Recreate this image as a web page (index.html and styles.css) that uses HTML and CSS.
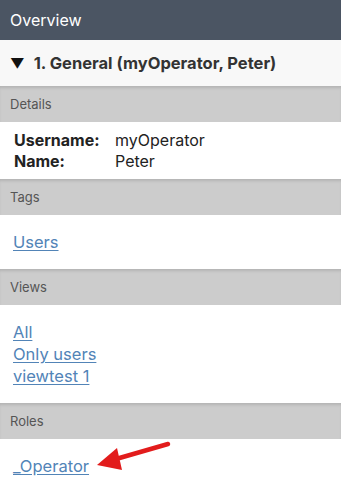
FILE: index.html
```html
<!DOCTYPE html>
<html lang="en">
<head>
  <meta charset="UTF-8">
  <meta name="viewport" content="width=device-width, initial-scale=1.0">
  <title>Overview</title>
  <link rel="stylesheet" href="styles.css">
</head>
<body>
  <div class="header">Overview</div>
  <div class="group-title">
    <span class="caret">&#9660;</span>
    <span>1. General (myOperator, Peter)</span>
  </div>

  <div class="section-bar">Details</div>
  <div class="details">
    <div class="detail-row"><span class="detail-key">Username:</span><span>myOperator</span></div>
    <div class="detail-row"><span class="detail-key">Name:</span><span>Peter</span></div>
  </div>

  <div class="section-bar">Tags</div>
  <div class="links">
    <a href="#">Users</a>
  </div>

  <div class="section-bar">Views</div>
  <div class="links">
    <a href="#">All</a>
    <a href="#">Only users</a>
    <a href="#">viewtest 1</a>
  </div>

  <div class="section-bar">Roles</div>
  <div class="links roles">
    <a href="#">_Operator</a>
    <svg class="arrow" width="90" height="40" viewBox="0 0 90 40">
      <line x1="78" y1="5" x2="26" y2="20" stroke="#e21c1c" stroke-width="4.5" stroke-linecap="round"/>
      <polygon points="7,26 27,9 32,31" fill="#e21c1c"/>
    </svg>
  </div>
</body>
</html>
```

FILE: styles.css
```css
* {
  --header-bg: #4b5563;
  --title-bg: #f8f8f8;
  --bar-bg: #cccccc;
  --bar-text: #555555;
  --text-color: #222222;
  --link-color: #5284b7;
}
body {
    margin: 0;
    background-color: #ffffff;
    font-family: Inter, "Noto Sans", sans-serif;
    color: var(--text-color);
}

.header {
    height: 40px;
    padding: 0 10px;
    display: flex;
    align-items: center;

    background-color: var(--header-bg);
    color: #ffffff;
    font-size: 16px;
}

.group-title {
    height: 46px;
    padding: 0 10px;
    display: flex;
    align-items: center;
    gap: 9px;

    background-color: var(--title-bg);
    color: #333333;
    font-size: 16.5px;
    font-weight: 700;
}
.caret {
    font-size: 14px;
    color: #111111;
}

.section-bar {
    height: 36px;
    padding: 0 10px;
    display: flex;
    align-items: center;

    background-color: var(--bar-bg);
    box-shadow: inset 0 3px 3px -1px rgba(0, 0, 0, 0.12);
    color: var(--bar-text);
    font-size: 13px;
}

.details {
    padding: 8px 14px 7px;
    font-size: 16px;
    line-height: 21px;
}
.detail-row {
    display: flex;
}
.detail-key {
    width: 101px;
    font-weight: 700;
}

.links {
    padding: 16px 13px;
    display: flex;
    flex-direction: column;
    align-items: flex-start;
    font-size: 16.5px;
    line-height: 22px;
}
.links a {
    color: var(--link-color);
    text-decoration: underline;
    text-underline-offset: 2px;
}

.roles {
    position: relative;
}
.arrow {
    position: absolute;
    left: 90px;
    top: 0;
}
```
